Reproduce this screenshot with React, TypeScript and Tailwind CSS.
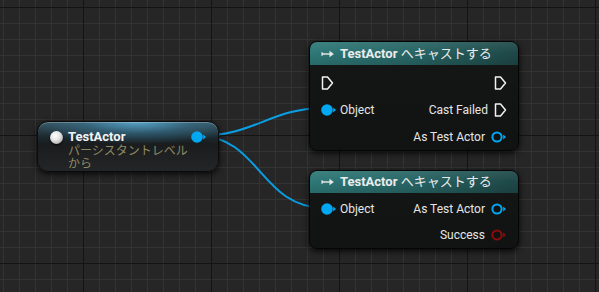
import React from "react";

const FONT = "font-['Roboto','Noto_Sans_CJK_JP',sans-serif]";

function ExecPin() {
  return (
    <svg width="13" height="14" viewBox="0 0 13 14" className="shrink-0">
      <path
        d="M1.5 1 H6.5 L11.5 7 L6.5 13 H1.5 Z"
        fill="none"
        stroke="#f2f2f2"
        strokeWidth="1.5"
        strokeLinejoin="round"
      />
    </svg>
  );
}

function DataPin({ color, filled }: { color: string; filled?: boolean }) {
  return (
    <svg width="16" height="12" viewBox="0 0 16 12" className="shrink-0">
      {filled ? (
        <circle cx="6" cy="6" r="5.8" fill={color} />
      ) : (
        <circle cx="6" cy="6" r="4.6" fill="#111" stroke={color} strokeWidth="2" />
      )}
      <path d="M12.2 3.6 L15 6 L12.2 8.4 Z" fill={color} />
    </svg>
  );
}

function CastIcon() {
  return (
    <svg width="13" height="8" viewBox="0 0 13 8" className="shrink-0">
      <path d="M0.5 1.8 L3.5 4 L0.5 6.2 Z" fill="#e8e8e8" />
      <rect x="3" y="3.3" width="6" height="1.4" fill="#e8e8e8" />
      <path d="M8.5 0.8 L12.8 4 L8.5 7.2 Z" fill="#e8e8e8" />
    </svg>
  );
}

function CastHeader() {
  return (
    <div className="flex h-[23px] items-center gap-[6px] rounded-t-[7px] bg-[linear-gradient(180deg,rgba(255,255,255,0.08)_0%,rgba(255,255,255,0)_50%,rgba(0,0,0,0.12)_100%),linear-gradient(90deg,#2d7877_0%,#286766_45%,#1e4747_100%)] pl-[11px] text-[13px] text-[#ececec]">
      <CastIcon />
      <span>
        <span className="font-bold">TestActor</span>
        <span> へキャストする</span>
      </span>
    </div>
  );
}

function Row({ left, right, h }: { left?: React.ReactNode; right?: React.ReactNode; h: string }) {
  return (
    <div className={`flex items-center justify-between px-[11px] ${h}`}>
      <div className="flex items-center gap-[3px]">{left}</div>
      <div className="flex items-center gap-[6px]">{right}</div>
    </div>
  );
}

const BLUE = "#00a7f2";

export default function App() {
  return (
    <div
      className={`relative h-[292px] w-[599px] overflow-hidden bg-[#262626] bg-[linear-gradient(to_right,#141414_1px,transparent_1px),linear-gradient(to_bottom,#141414_1px,transparent_1px),linear-gradient(to_right,#333333_1px,transparent_1px),linear-gradient(to_bottom,#333333_1px,transparent_1px)] bg-[size:128px_128px,128px_128px,16px_16px,16px_16px] bg-[position:83px_7px,83px_7px,3px_7px,3px_7px] ${FONT}`}
    >
      {/* wires */}
      <svg className="absolute inset-0" width="599" height="292">
        <path d="M198 136 C 255 136, 270 108, 325 108" fill="none" stroke="#0a9fe4" strokeWidth="2" />
        <path d="M198 136 C 260 136, 260 208, 325 208" fill="none" stroke="#0a9fe4" strokeWidth="2" />
      </svg>

      {/* variable node */}
      <div className="absolute left-[37px] top-[121px] flex h-[51px] w-[182px] items-start rounded-[11px] border border-[#0b0b0b] bg-[radial-gradient(ellipse_60%_45%_at_55%_0%,rgba(90,175,215,0.85)_0%,rgba(60,130,165,0.45)_50%,rgba(0,0,0,0)_100%),linear-gradient(180deg,#37525e_0%,#1c2a30_30%,#1a1c1d_45%,#242526_100%)] pl-[12px] pt-[6px] shadow-[0_2px_6px_rgba(0,0,0,0.8),inset_0_1px_0_rgba(255,255,255,0.25)]">
        <div className="mt-[3px] h-[13px] w-[13px] shrink-0 rounded-full bg-[radial-gradient(circle_at_40%_35%,#ffffff_0%,#e6e6e6_40%,#8a8a8a_100%)] shadow-[0_1px_2px_rgba(0,0,0,0.9)]" />
        <div className="ml-[5px] flex flex-col">
          <span className="text-[13px] font-bold leading-[17px] text-[#f4f4f4]">TestActor</span>
          <span className="text-[12px] leading-[13px] text-[#8e8a63]">
            パーシスタントレベル
            <br />
            から
          </span>
        </div>
        <div className="absolute left-[153px] top-[9px]">
          <DataPin color={BLUE} filled />
        </div>
      </div>

      {/* cast node (top) */}
      <div className="absolute left-[309px] top-[41px] flex h-[110px] w-[210px] flex-col rounded-[8px] border border-[#050505] bg-[linear-gradient(180deg,#141716_0%,#111312_100%)] text-[12px] text-[#e6e6e6] shadow-[0_2px_6px_rgba(0,0,0,0.85)]">
        <CastHeader />
        <div className="pt-[4px]">
          <Row h="h-[27px]" left={<ExecPin />} right={<ExecPin />} />
          <Row
            h="h-[27px]"
            left={
              <>
                <DataPin color={BLUE} filled />
                <span>Object</span>
              </>
            }
            right={
              <>
                <span>Cast Failed</span>
                <ExecPin />
              </>
            }
          />
          <Row
            h="h-[27px]"
            right={
              <>
                <span>As Test Actor</span>
                <DataPin color={BLUE} />
              </>
            }
          />
        </div>
      </div>

      {/* cast node (bottom) */}
      <div className="absolute left-[309px] top-[170px] flex h-[79px] w-[210px] flex-col rounded-[8px] border border-[#050505] bg-[linear-gradient(180deg,#141716_0%,#111312_100%)] text-[12px] text-[#e6e6e6] shadow-[0_2px_6px_rgba(0,0,0,0.85)]">
        <CastHeader />
        <div className="pt-[3px]">
          <Row
            h="h-[26px]"
            left={
              <>
                <DataPin color={BLUE} filled />
                <span>Object</span>
              </>
            }
            right={
              <>
                <span>As Test Actor</span>
                <DataPin color={BLUE} />
              </>
            }
          />
          <Row
            h="h-[26px]"
            right={
              <>
                <span>Success</span>
                <DataPin color="#8c0c0c" />
              </>
            }
          />
        </div>
      </div>
    </div>
  );
}
